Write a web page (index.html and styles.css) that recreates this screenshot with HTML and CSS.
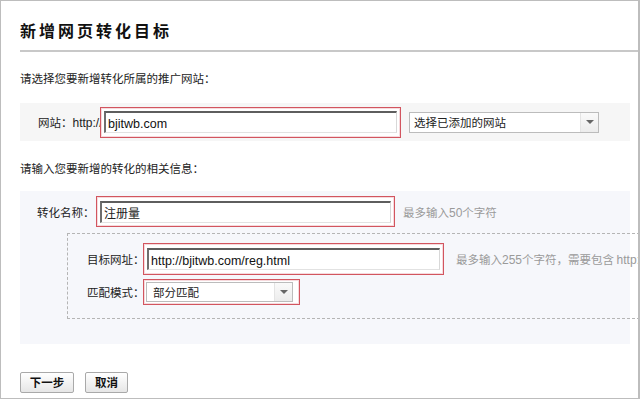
FILE: index.html
```html
<!DOCTYPE html>
<html lang="zh-CN">
<head>
<meta charset="utf-8">
<title>新增网页转化目标</title>
<link rel="stylesheet" href="styles.css">
</head>
<body>
<div class="frame">
  <div class="head"><h1 class="title">新增网页转化目标</h1></div>

  <p class="intro intro-first">请选择您要新增转化所属的推广网站：</p>
  <div class="site-row">
    <span class="label-site">网站：<span class="latin">http://</span></span>
    <div class="hl hl-site">
      <div class="input input-site"><span class="latin">bjitwb.com</span></div>
    </div>
    <div class="select select-site">
      <span class="select-text">选择已添加的网站</span>
      <span class="select-btn"><span class="tri"></span></span>
    </div>
  </div>

  <p class="intro intro-second">请输入您要新增的转化的相关信息：</p>
  <div class="info">
    <div class="name-row">
      <span class="label-name">转化名称：</span>
      <div class="hl hl-name">
        <div class="input input-name">注册量</div>
      </div>
      <span class="hint">最多输入<span class="latin">50</span>个字符</span>
    </div>
    <div class="dashed">
      <div class="url-row">
        <span class="label-inner">目标网址：</span>
        <div class="hl hl-url">
          <div class="input input-url"><span class="latin">http://bjitwb.com/reg.html</span></div>
        </div>
        <span class="hint hint-url">最多输入<span class="latin">255</span>个字符，需要包含 <span class="latin">http://</span></span>
      </div>
      <div class="match-row">
        <span class="label-inner">匹配模式：</span>
        <div class="hl hl-match">
          <div class="select select-match">
            <span class="select-text">部分匹配</span>
            <span class="select-btn"><span class="tri"></span></span>
          </div>
        </div>
      </div>
    </div>
  </div>

  <div class="actions">
    <button class="btn btn-next" type="button">下一步</button>
    <button class="btn btn-cancel" type="button">取消</button>
  </div>
</div>
</body>
</html>
```

FILE: styles.css
```css
* { box-sizing: border-box; }
html, body { margin: 0; padding: 0; background: #fff; }
body {
  font-family: "Noto Sans CJK SC", "Liberation Sans", sans-serif;
  font-size: 11.5px;
  color: #222;
}
.latin { font-family: "Liberation Sans", Arial, sans-serif; }

.frame {
  width: 640px;
  height: 399px;
  border: 1px solid #bdbdbd;
  border-right-width: 2px;
  padding-left: 19px;
  overflow: hidden;
}

.head {
  padding-top: 19px;
  padding-bottom: 10px;
  border-bottom: 2px solid #c8c8c8;
}
.title {
  margin: 0;
  font-size: 16px;
  line-height: 20px;
  font-weight: 700;
  letter-spacing: 3px;
  color: #111;
}

.intro {
  margin: 0;
  line-height: 20px;
  white-space: nowrap;
}
.intro-first { margin-top: 16px; }
.intro-second { margin-top: 17px; }

.site-row {
  margin-top: 15px;
  margin-right: 8px;
  height: 38px;
  background: #f6f6f6;
  display: flex;
  align-items: center;
  padding-left: 18px;
}
.label-site { width: 62px; white-space: nowrap; }
.label-site .latin { font-size: 12px; }

.hl {
  border: 1px solid #d2555f;
  box-shadow: inset 0 0 0 1px #f6dadd;
  background: #fff;
  display: flex;
  align-items: center;
}
.hl-site { width: 301px; height: 31px; padding: 0 3px; }
.hl-name { width: 299px; height: 31px; padding: 0 3px; }
.hl-url { width: 301px; height: 32px; padding: 0 3px; }
.hl-match { width: 157px; height: 26px; padding: 0 6px 0 2px; }

.input {
  flex: 1;
  height: 22px;
  background: #fff;
  border-top: 2px solid #5e5e5e;
  border-left: 2px solid #6e6e6e;
  border-right: 1px solid #d8d8d8;
  border-bottom: 1px solid #e2e2e2;
  padding-left: 2px;
  line-height: 19px;
  font-size: 12px;
  white-space: nowrap;
  overflow: hidden;
}
.input .latin { font-size: 12.5px; color: #111; }

.select {
  display: flex;
  align-items: stretch;
  height: 21px;
  border: 1px solid #bcbcbc;
  background: #fff;
}
.select-site { width: 190px; margin-left: 8px; }
.select-match { flex: 1; height: 20px; }
.select-text {
  flex: 1;
  padding-left: 4px;
  line-height: 19px;
  white-space: nowrap;
}
.select-match .select-text { padding-left: 6px; }
.select-btn {
  width: 18px;
  border-left: 1px solid #e4e4e4;
  background: linear-gradient(#fafafa, #ececec);
  display: flex;
  align-items: center;
  justify-content: center;
}
.tri {
  width: 0;
  height: 0;
  border-left: 4px solid transparent;
  border-right: 4px solid transparent;
  border-top: 4px solid #666;
}

.info {
  margin-top: 13px;
  margin-right: 8px;
  background: #f6f7fb;
  padding: 5px 0 25px 17px;
}
.name-row {
  display: flex;
  align-items: center;
}
.label-name { width: 59px; white-space: nowrap; }
.hint {
  color: #9a9a9a;
  margin-left: 8px;
  white-space: nowrap;
}
.hint .latin { font-size: 12px; }

.dashed {
  margin-top: 6px;
  margin-left: 30px;
  margin-right: -30px;
  border: 1px dashed #b5b5b5;
  padding: 9px 0 13px 19px;
}
.url-row, .match-row {
  display: flex;
  align-items: center;
}
.match-row { margin-top: 4px; }
.label-inner { width: 56px; white-space: nowrap; }
.hint-url { margin-left: 12px; }

.actions {
  margin-top: 28px;
  display: flex;
  gap: 11px;
}
.btn {
  height: 21px;
  padding: 0;
  border: 1px solid #a9a9a9;
  border-radius: 2px;
  background: linear-gradient(#ffffff, #e6e6e6);
  font-family: "Noto Sans CJK SC", sans-serif;
  font-size: 11.5px;
  font-weight: 700;
  color: #111;
  line-height: 19px;
}
.btn-next { width: 54px; }
.btn-cancel { width: 43px; }
```
